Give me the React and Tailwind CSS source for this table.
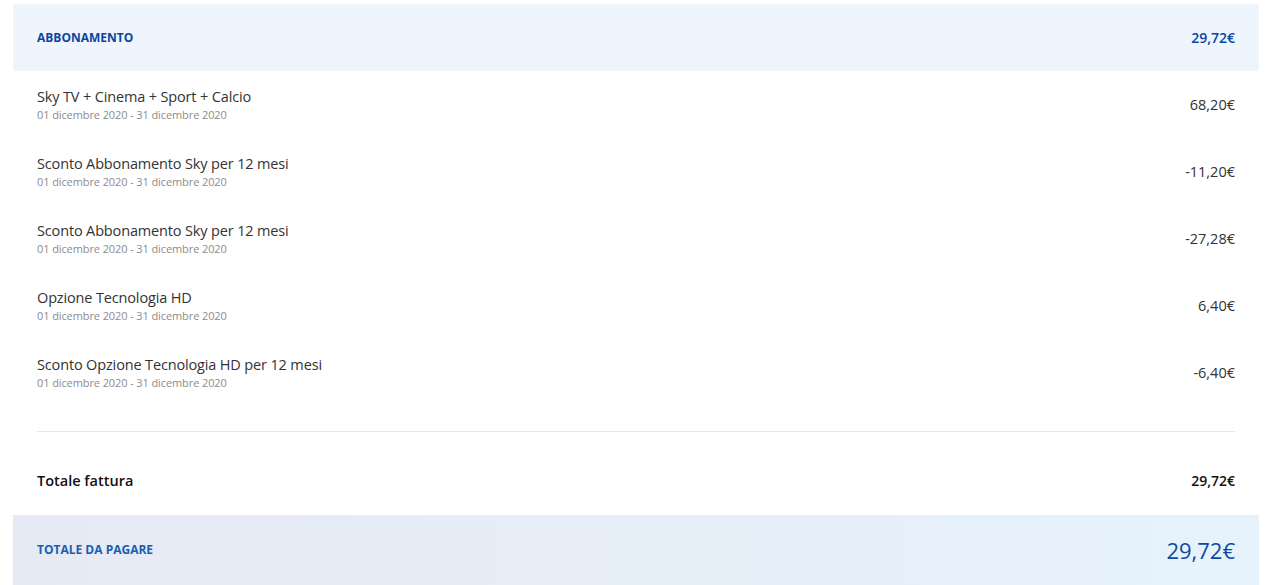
const items = [
  { label: "Sky TV + Cinema + Sport + Calcio", period: "01 dicembre 2020 - 31 dicembre 2020", amount: "68,20€" },
  { label: "Sconto Abbonamento Sky per 12 mesi", period: "01 dicembre 2020 - 31 dicembre 2020", amount: "-11,20€" },
  { label: "Sconto Abbonamento Sky per 12 mesi", period: "01 dicembre 2020 - 31 dicembre 2020", amount: "-27,28€" },
  { label: "Opzione Tecnologia HD", period: "01 dicembre 2020 - 31 dicembre 2020", amount: "6,40€" },
  { label: "Sconto Opzione Tecnologia HD per 12 mesi", period: "01 dicembre 2020 - 31 dicembre 2020", amount: "-6,40€" }
];

const App = () => {
  return (
    <div className="min-h-[585px] bg-white px-[13px] pt-[4px] font-['Open_Sans',sans-serif]">
      <div className="w-[1246px]">
        <div className="flex h-[67px] items-center justify-between bg-[#eef5fd] px-[24px]">
          <span className="text-[12px] font-bold text-[#0b45a3]">ABBONAMENTO</span>
          <span className="text-[14px] font-semibold text-[#0b45a3]">29,72€</span>
        </div>

        <div className="px-[24px]">
          {items.map((item, i) => (
            <div key={i} className="flex h-[67px] items-center justify-between">
              <div>
                <p className="text-[14.5px] leading-[18px] tracking-[-0.15px] text-[#333]">{item.label}</p>
                <p className="mt-[2px] text-[11px] leading-[14px] tracking-[-0.1px] text-[#8c8c8c]">{item.period}</p>
              </div>
              <span className="text-[14.5px] text-[#333]">{item.amount}</span>
            </div>
          ))}

          <div className="mt-[25px] border-t border-[#e6e6e6]" />

          <div className="flex items-center justify-between pb-[25px] pt-[40px]">
            <span className="text-[14.5px] font-semibold leading-[18px] text-[#111]">Totale fattura</span>
            <span className="text-[14px] font-semibold leading-[18px] text-[#111]">29,72€</span>
          </div>
        </div>

        <div className="flex h-[70px] items-center justify-between bg-gradient-to-r from-[#e6eaf4] to-[#e6f2fc] px-[24px]">
          <span className="text-[12px] font-bold text-[#1a5db2]">TOTALE DA PAGARE</span>
          <span className="text-[22px] text-[#0d4a9e]">29,72€</span>
        </div>
      </div>
    </div>
  );
};

export default App;
